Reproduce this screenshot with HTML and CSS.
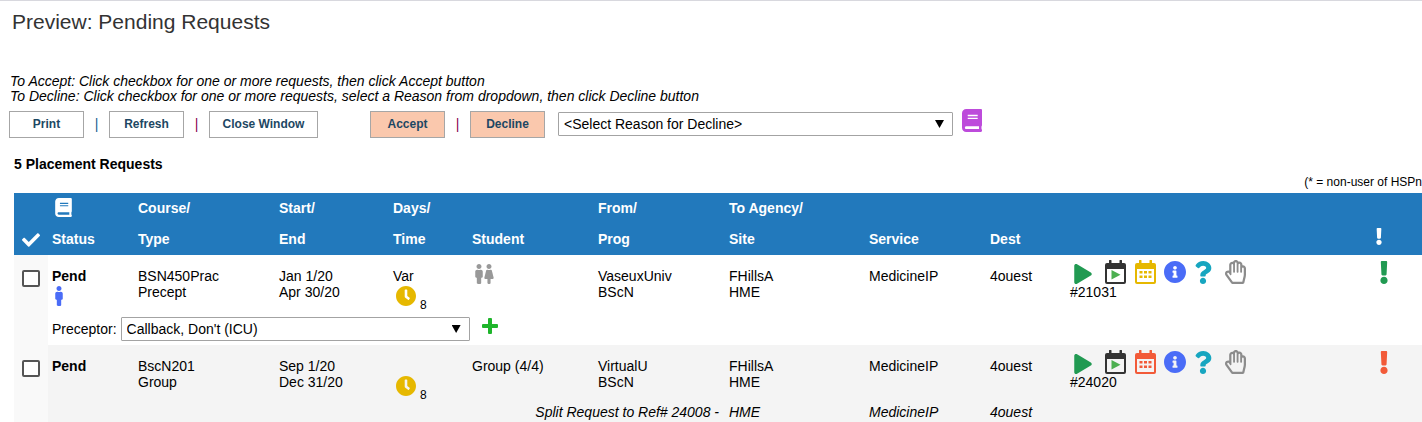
FILE: index.html
```html
<!DOCTYPE html>
<html lang="en">
<head>
<meta charset="utf-8">
<title>Preview: Pending Requests</title>
<link rel="stylesheet" href="styles.css">
</head>
<body>
<svg class="sprite" aria-hidden="true">
  <symbol id="check" viewBox="0 0 512 512"><path d="M173.898 439.404l-166.4-166.4c-9.997-9.997-9.997-26.206 0-36.204l36.203-36.204c9.997-9.998 26.207-9.998 36.204 0L192 312.69 432.095 72.596c9.997-9.997 26.207-9.997 36.204 0l36.203 36.204c9.997 9.997 9.997 26.206 0 36.204l-294.4 294.401c-9.998 9.997-26.207 9.997-36.204-.001z"/></symbol>
  <symbol id="book" viewBox="0 0 448 512"><path d="M448 360V24c0-13.3-10.7-24-24-24H96C43 0 0 43 0 96v320c0 53 43 96 96 96h328c13.3 0 24-10.7 24-24v-16c0-7.5-3.5-14.3-8.9-18.7-4.2-15.4-4.2-59.3 0-74.7 5.4-4.3 8.9-11.1 8.9-18.6zM128 134c0-3.3 2.7-6 6-6h212c3.3 0 6 2.7 6 6v20c0 3.3-2.7 6-6 6H134c-3.3 0-6-2.7-6-6v-20zm0 64c0-3.3 2.7-6 6-6h212c3.3 0 6 2.7 6 6v20c0 3.3-2.7 6-6 6H134c-3.3 0-6-2.7-6-6v-20zm253.4 250H96c-17.7 0-32-14.3-32-32 0-17.6 14.4-32 32-32h285.4c-1.9 17.1-1.9 46.9 0 64z"/></symbol>
  <symbol id="male" viewBox="0 0 192 512"><path d="M96 0c35.346 0 64 28.654 64 64s-28.654 64-64 64-64-28.654-64-64S60.654 0 96 0m48 144h-11.36c-22.711 10.443-49.59 10.894-73.28 0H48c-26.51 0-48 21.49-48 48v136c0 13.255 10.745 24 24 24h16v136c0 13.255 10.745 24 24 24h64c13.255 0 24-10.745 24-24V352h16c13.255 0 24-10.745 24-24V192c0-26.51-21.49-48-48-48z"/></symbol>
  <symbol id="female" viewBox="0 0 256 512"><path d="M128 0c35.346 0 64 28.654 64 64s-28.654 64-64 64c-35.346 0-64-28.654-64-64S92.654 0 128 0m119.283 354.179l-48-192A24 24 0 0 0 176 144h-11.36c-22.711 10.443-49.59 10.894-73.28 0H80a24 24 0 0 0-23.283 18.179l-48 192C4.935 369.305 16.383 384 32 384h56v104c0 13.255 10.745 24 24 24h32c13.255 0 24-10.745 24-24V384h56c15.591 0 27.071-14.671 23.283-29.821z"/></symbol>
  <symbol id="clock" viewBox="8 8 496 496"><path d="M256,8C119,8,8,119,8,256S119,504,256,504,504,393,504,256,393,8,256,8Zm92.49,313h0l-20,25a16,16,0,0,1-22.49,2.5h0l-67-49.72a40,40,0,0,1-15-31.23V112a16,16,0,0,1,16-16h32a16,16,0,0,1,16,16V256l58,42.5A16,16,0,0,1,348.49,321Z"/></symbol>
  <symbol id="plus" viewBox="0 0 16 16"><path d="M7 0h2q1 0 1 1v5h5q1 0 1 1v2q0 1-1 1h-5v5q0 1-1 1h-2q-1 0-1-1v-5h-5q-1 0-1-1v-2q0-1 1-1h5v-5q0-1 1-1z"/></symbol>
  <symbol id="play" viewBox="0 0 448 512"><path d="M424.4 214.7L72.4 6.6C43.8-10.3 0 6.1 0 47.9V464c0 37.5 40.7 60.1 72.4 41.3l352-208c31.4-18.5 31.5-64.1 0-82.6z"/></symbol>
  <symbol id="cal" viewBox="0 0 21 24"><path fill-rule="evenodd" d="M4.500 0h1.500q.5 0 .5.5V3h8V.5q0-.5.5-.5h1.500q.5 0 .5.500V3H19q2 0 2 2v17q0 2-2 2H2q-2 0-2-2V5q0-2 2-2h2V.5q0-.5.5-.5zM2 9v12.500q0 .5.5.5h16q.5 0 .5-.5V9z"/></symbol>
  <symbol id="dots" viewBox="0 0 21 24"><path d="M4.500 11h3v2.500h-3zM9 11h3v2.500H9zM13.500 11h3v2.500h-3zM4.500 15.500h3V18h-3zM9 15.500h3V18H9zM13.500 15.500h3V18h-3z"/></symbol>
  <symbol id="info" viewBox="8 8 496 496"><path d="M256 8C119.043 8 8 119.083 8 256c0 136.997 111.043 248 248 248s248-111.003 248-248C504 119.083 392.957 8 256 8zm0 110c23.196 0 42 18.804 42 42s-18.804 42-42 42-42-18.804-42-42 18.804-42 42-42zm56 254c0 6.627-5.373 12-12 12h-88c-6.627 0-12-5.373-12-12v-24c0-6.627 5.373-12 12-12h12v-64h-12c-6.627 0-12-5.373-12-12v-24c0-6.627 5.373-12 12-12h64c6.627 0 12 5.373 12 12v100h12c6.627 0 12 5.373 12 12v24z"/></symbol>
  <symbol id="question" viewBox="0 0 384 512"><path d="M202.021 0C122.202 0 70.503 32.703 29.914 91.026c-7.363 10.58-5.093 25.086 5.178 32.874l43.138 32.709c10.373 7.865 25.132 6.026 33.253-4.148 25.049-31.381 43.63-49.449 82.757-49.449 30.764 0 68.816 19.799 68.816 49.631 0 22.552-18.617 34.134-48.993 51.164-35.423 19.86-82.299 44.576-82.299 106.405V320c0 13.255 10.745 24 24 24h72.471c13.255 0 24-10.745 24-24v-5.773c0-42.86 125.268-44.645 125.268-160.627C377.504 66.256 286.902 0 202.021 0zM192 373.459c-38.196 0-69.271 31.075-69.271 69.271 0 38.195 31.075 69.27 69.271 69.27s69.271-31.075 69.271-69.271-31.075-69.27-69.271-69.27z"/></symbol>
  <symbol id="hand" viewBox="0 0 448 512"><path d="M372.57 112.641v-10.825c0-43.612-40.52-76.691-83.039-65.546-25.629-49.5-94.09-47.45-117.982.747C130.269 26.456 89.144 57.945 89.144 102v126.13c-19.953-7.427-43.308-5.068-62.083 8.871-29.355 21.796-35.794 63.333-14.55 93.153L132.48 498.569a32 32 0 0 0 26.062 13.432h222.897c14.904 0 27.835-10.289 31.182-24.813l30.184-130.958A203.637 203.637 0 0 0 448 310.564V179c0-40.62-35.523-71.992-75.43-66.359zm27.427 197.922c0 11.731-1.334 23.469-3.965 34.886L368.707 464h-201.92L51.591 302.303c-14.439-20.27 15.023-42.776 29.394-22.605l27.128 38.079c8.995 12.626 29.031 6.287 29.031-9.283V102c0-25.645 36.571-24.81 36.571.691V256c0 8.837 7.163 16 16 16h6.856c8.837 0 16-7.163 16-16V67c0-25.663 36.571-24.81 36.571.691V256c0 8.837 7.163 16 16 16h6.856c8.837 0 16-7.163 16-16V101.125c0-25.672 36.57-24.81 36.57.691V256c0 8.837 7.164 16 16 16h6.857c8.837 0 16-7.163 16-16v-76.309c0-26.242 36.57-25.64 36.57-.691v131.563z"/></symbol>
  <symbol id="bang" viewBox="16 0 160 512"><path d="M176 432c0 44.112-35.888 80-80 80s-80-35.888-80-80 35.888-80 80-80 80 35.888 80 80zM25.260 25.199l13.600 272C39.499 309.972 50.041 320 62.830 320h66.340c12.789 0 23.331-10.028 23.970-22.801l13.600-272C167.425 11.490 156.496 0 142.770 0H49.230C35.504 0 24.575 11.490 25.260 25.199z"/></symbol>
</svg>

<header class="page-head"><h1>Preview: Pending Requests</h1></header>

<main>
  <p class="instructions">To Accept: Click checkbox for one or more requests, then click Accept button<br>To Decline: Click checkbox for one or more requests, select a Reason from dropdown, then click Decline button</p>

  <div class="toolbar">
    <div class="group">
      <button class="btn" type="button">Print</button>
      <span class="bar bar-blue">|</span>
      <button class="btn" type="button">Refresh</button>
      <span class="bar">|</span>
      <button class="btn btn-wide" type="button">Close Window</button>
    </div>
    <div class="group">
      <button class="btn btn-peach" type="button">Accept</button>
      <span class="bar">|</span>
      <button class="btn btn-peach" type="button">Decline</button>
      <span class="select reason"><select aria-label="Reason for decline"><option>&lt;Select Reason for Decline&gt;</option></select></span>
      <button class="icon-btn help-book" type="button" aria-label="Help"><svg class="ic-book"><use href="#book"/></svg></button>
    </div>
  </div>

  <h2>5 Placement Requests</h2>
  <p class="note">(* = non-user of HSPn</p>

  <table>
    <colgroup>
      <col class="c-check"><col class="c-status"><col class="c-course"><col class="c-dates"><col class="c-days"><col class="c-student"><col class="c-from"><col class="c-to"><col class="c-service"><col class="c-dest"><col><col class="c-alert">
    </colgroup>
    <thead>
      <tr>
        <th></th><th><svg class="ic-head-book"><use href="#book"/></svg></th><th>Course/</th><th>Start/</th><th>Days/</th><th></th><th>From/</th><th>To Agency/</th><th></th><th></th><th></th><th></th>
      </tr>
      <tr>
        <th class="center"><svg class="ic-check"><use href="#check"/></svg></th><th>Status</th><th>Type</th><th>End</th><th>Time</th><th>Student</th><th>Prog</th><th>Site</th><th>Service</th><th>Dest</th><th></th><th class="head-alert"><svg class="ic-head-bang"><use href="#bang"/></svg></th>
      </tr>
    </thead>
    <tbody>
      <tr class="request">
        <td class="pick" rowspan="2"><input type="checkbox" aria-label="Select request 21031"></td>
        <td><b>Pend</b><svg class="ic-male blue"><use href="#male"/></svg></td>
        <td>BSN450Prac<br>Precept</td>
        <td>Jan 1/20<br>Apr 30/20</td>
        <td>Var<div class="hours"><svg class="ic-clock"><use href="#clock"/></svg><span>8</span></div></td>
        <td class="icons-top"><div class="pair"><svg class="ic-male"><use href="#male"/></svg><svg class="ic-female"><use href="#female"/></svg></div></td>
        <td>VaseuxUniv<br>BScN</td>
        <td>FHillsA<br>HME</td>
        <td>MedicineIP</td>
        <td>4ouest</td>
        <td class="actions">
          <div class="strip">
            <button class="icon-btn start" type="button" aria-label="Start"><svg class="ic-play green"><use href="#play"/></svg></button>
            <button class="icon-btn" type="button" aria-label="Schedule start"><svg class="ic-cal dark"><use href="#cal"/><path class="leaf" d="M6.500 10v9.500l9-4.750z"/></svg></button>
            <button class="icon-btn" type="button" aria-label="Calendar"><svg class="ic-cal gold"><use href="#cal"/><use href="#dots"/></svg></button>
            <button class="icon-btn" type="button" aria-label="Information"><svg class="ic-info blue"><use href="#info"/></svg></button>
            <button class="icon-btn start" type="button" aria-label="Question"><svg class="ic-question teal"><use href="#question"/></svg></button>
            <button class="icon-btn end" type="button" aria-label="Hold"><svg class="ic-hand grey"><use href="#hand"/></svg></button>
          </div>#21031
        </td>
        <td class="alert"><svg class="ic-bang green"><use href="#bang"/></svg></td>
      </tr>
      <tr class="detail">
        <td colspan="11">
          <div class="preceptor">
            <label for="preceptor">Preceptor:</label>
            <span class="select person"><select id="preceptor"><option>Callback, Don't (ICU)</option></select></span>
            <button class="icon-btn add" type="button" aria-label="Add preceptor"><svg class="ic-plus"><use href="#plus"/></svg></button>
          </div>
        </td>
      </tr>
    </tbody>
    <tbody class="shaded">
      <tr class="request">
        <td class="pick" rowspan="2"><input type="checkbox" aria-label="Select request 24020"></td>
        <td><b>Pend</b></td>
        <td>BscN201<br>Group</td>
        <td>Sep 1/20<br>Dec 31/20</td>
        <td><br><div class="hours"><svg class="ic-clock"><use href="#clock"/></svg><span>8</span></div></td>
        <td>Group (4/4)</td>
        <td>VirtualU<br>BScN</td>
        <td>FHillsA<br>HME</td>
        <td>MedicineIP</td>
        <td>4ouest</td>
        <td class="actions">
          <div class="strip">
            <button class="icon-btn start" type="button" aria-label="Start"><svg class="ic-play green"><use href="#play"/></svg></button>
            <button class="icon-btn" type="button" aria-label="Schedule start"><svg class="ic-cal dark"><use href="#cal"/><path class="leaf" d="M6.500 10v9.500l9-4.750z"/></svg></button>
            <button class="icon-btn" type="button" aria-label="Calendar"><svg class="ic-cal red"><use href="#cal"/><use href="#dots"/></svg></button>
            <button class="icon-btn" type="button" aria-label="Information"><svg class="ic-info blue"><use href="#info"/></svg></button>
            <button class="icon-btn start" type="button" aria-label="Question"><svg class="ic-question teal"><use href="#question"/></svg></button>
            <button class="icon-btn end" type="button" aria-label="Hold"><svg class="ic-hand grey"><use href="#hand"/></svg></button>
          </div>#24020
        </td>
        <td class="alert"><svg class="ic-bang red"><use href="#bang"/></svg></td>
      </tr>
      <tr class="split">
        <td class="split-label" colspan="6">Split Request to Ref# 24008 -</td>
        <td>HME</td><td>MedicineIP</td><td>4ouest</td><td colspan="2"></td>
      </tr>
    </tbody>
  </table>
</main>
</body>
</html>
```

FILE: styles.css
```css
* { box-sizing: border-box; }

body {
  margin: 0;
  background: #fff;
  color: #000;
  font: 14px/16px Arial, "Liberation Sans", sans-serif;
}

svg { display: block; fill: currentColor; }
.sprite { position: absolute; width: 0; height: 0; }

.page-head { border-top: 1px solid #d8d8de; padding: 9px 12px 0; }
h1 { margin: 0; font-size: 21px; line-height: 24px; font-weight: 400; color: #333; }

.instructions { margin: 40px 0 0 10px; line-height: 15px; font-style: italic; }

.toolbar { display: flex; gap: 52px; padding: 4px 9px 0; }
.group { display: flex; align-items: center; }
.btn {
  min-width: 75px;
  height: 27px;
  padding: 0 10px 1px;
  border: 1px solid #a6a6a6;
  background: #fff;
  color: #1d4763;
  font: bold 12px/16px Arial, "Liberation Sans", sans-serif;
}
.btn-wide { min-width: 109px; }
.btn-peach { background: #fac8ad; }
.bar { width: 25px; text-align: center; color: #8a0051; }
.bar-blue { color: #146090; }

.select { position: relative; display: block; }
.select::after {
  content: "";
  position: absolute;
  right: 9px;
  top: 8px;
  width: 9px;
  height: 8px;
  background: #000;
  clip-path: polygon(0 0, 100% 0, 50% 100%);
  pointer-events: none;
}
.select select {
  display: block;
  width: 100%;
  height: 24px;
  padding: 0 24px 0 5px;
  border: 1px solid #a3a3a3;
  border-radius: 1px;
  appearance: none;
  background: #fff;
  color: #000;
  font: 14px/20px Arial, "Liberation Sans", sans-serif;
}
.reason { width: 395px; margin-left: 13px; }
.person { width: 349px; }

.icon-btn {
  display: flex;
  align-items: center;
  justify-content: center;
  width: 22px;
  height: 24px;
  padding: 0;
  border: 0;
  background: none;
}
.help-book { margin: 0 0 8px 8px; color: #bd4bdb; }

h2 { margin: 16px 14px 0; font-size: 14px; line-height: 16px; }
.note { margin: 3px 0; font-size: 12px; line-height: 15px; text-align: right; }

table { width: calc(100% - 14px); margin-left: 14px; border-collapse: collapse; table-layout: fixed; }
.c-check { width: 34px; }
.c-status { width: 86px; }
.c-course { width: 141px; }
.c-dates { width: 114px; }
.c-days { width: 79px; }
.c-student { width: 126px; }
.c-from { width: 131px; }
.c-to { width: 140px; }
.c-service { width: 121px; }
.c-dest { width: 80px; }
.c-alert { width: 52px; }

th {
  height: 31px;
  padding: 0 4px 2px;
  background: #2279bc;
  color: #fff;
  font-size: 14px;
  text-align: left;
  vertical-align: middle;
}
th.center { padding: 0 8px; }
th.head-alert { padding: 0 6px 6px; }
td { padding: 0 4px; vertical-align: top; }

.request td { padding-top: 13px; }
.request .pick { padding: 15px 8px 0; background: #f9f9f9; }
.request .icons-top { padding: 9px 7px 0; }
.request .actions { padding-top: 5px; }
.request .alert { padding: 6px 10px 0; }
.shaded { background: #f4f4f4; }

input[type="checkbox"] {
  display: block;
  width: 18px;
  height: 17px;
  margin: 0;
  border: 2px solid #555;
  border-radius: 2px;
  appearance: none;
  background: #fff;
}

.hours { display: flex; gap: 4px; padding: 2px 3px 0; }
.hours span { padding-top: 11px; font-size: 12px; line-height: 16px; }
.pair { display: flex; gap: 1px; color: #999; }
.strip { display: flex; gap: 8px; padding-left: 4px; }
.start { justify-content: flex-start; }
.end { justify-content: flex-end; }
td b { display: block; padding-bottom: 2px; }
td > .ic-male { margin-left: 3px; }

.detail td { padding: 4px; }
.preceptor { display: flex; gap: 4px; align-items: center; }
.add { align-self: flex-start; height: 18px; margin-left: 5px; color: #1fb52b; }
.split { font-style: italic; }
.split td { padding: 1px 4px 2px; }
.split .split-label { padding-right: 6px; text-align: right; }

.ic-book { width: 20px; height: 23px; }
.ic-head-book { width: 17px; height: 19px; margin-left: 3px; }
.ic-check { width: 18px; height: 18px; }
.ic-head-bang { width: 6px; height: 17px; }
.ic-male { width: 8px; height: 20px; }
.ic-female { width: 10px; height: 20px; }
.ic-clock { width: 20px; height: 20px; color: #e6b800; }
.ic-play { width: 18px; height: 20px; margin-top: 3px; }
.ic-cal { width: 21px; height: 24px; }
.ic-info { width: 22px; height: 22px; }
.ic-question { width: 18px; height: 23px; }
.ic-hand { width: 21px; height: 24px; }
.ic-bang { width: 8px; height: 23px; }
.ic-plus { width: 16px; height: 16px; }

.green { color: #219a52; }
.blue { color: #4a6cf7; }
.teal { color: #17a6c0; }
.grey { color: #8c8c8c; }
.gold { color: #e6b800; }
.red { color: #f25a38; }
.dark { color: #333; }
.leaf { fill: #4caf50; }
```
